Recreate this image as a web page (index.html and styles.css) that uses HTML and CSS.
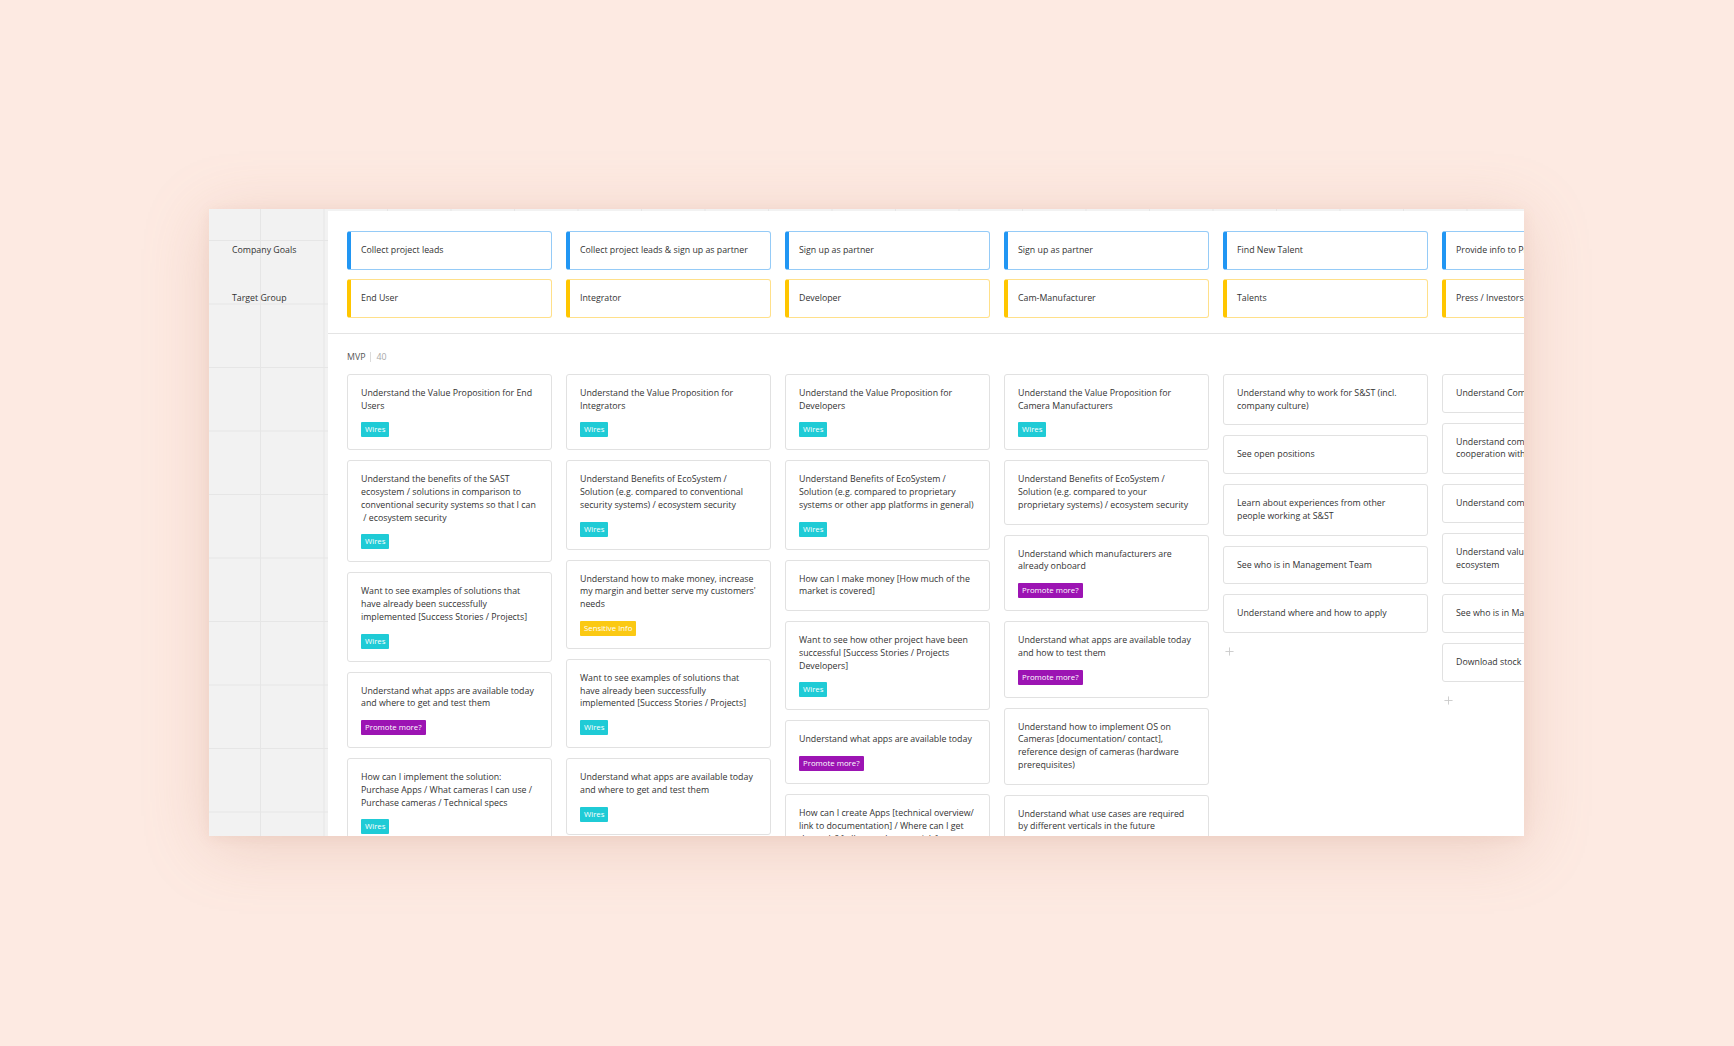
FILE: index.html
```html
<!DOCTYPE html>
<html lang="en">
<head>
    <meta charset="UTF-8">
    <meta name="viewport" content="width=device-width, initial-scale=1.0">
    <title>Story Map | S&amp;ST Website</title>
    <link rel="stylesheet" href="styles.css">
</head>
<body>
    <div class="board">
        <!-- Row labels on the left -->
        <aside class="sidebar">
            <div class="row-label">Company Goals</div>
            <div class="row-label">Target Group</div>
        </aside>

        <main class="map">
            <!-- Goals and personas per column -->
            <header class="map-header">
                <div class="head-col">
                    <div class="head-card goal">Collect project leads</div>
                    <div class="head-card persona">End User</div>
                </div>
                <div class="head-col">
                    <div class="head-card goal">Collect project leads &amp; sign up as partner</div>
                    <div class="head-card persona">Integrator</div>
                </div>
                <div class="head-col">
                    <div class="head-card goal">Sign up as partner</div>
                    <div class="head-card persona">Developer</div>
                </div>
                <div class="head-col">
                    <div class="head-card goal">Sign up as partner</div>
                    <div class="head-card persona">Cam-Manufacturer</div>
                </div>
                <div class="head-col">
                    <div class="head-card goal">Find New Talent</div>
                    <div class="head-card persona">Talents</div>
                </div>
                <div class="head-col">
                    <div class="head-card goal">Provide info to Press / Investors</div>
                    <div class="head-card persona">Press / Investors</div>
                </div>
            </header>

            <section class="release">
                <div class="release-title">MVP <span class="sep"></span> <span class="count">40</span></div>

                <div class="columns">
                    <div class="col">
                        <div class="story">
                            <p>Understand the Value Proposition for End Users</p>
                            <span class="tag wires">Wires</span>
                        </div>
                        <div class="story">
                            <p>Understand the benefits of the SAST ecosystem / solutions in comparison to conventional security systems so that I can &nbsp;/ ecosystem security</p>
                            <span class="tag wires">Wires</span>
                        </div>
                        <div class="story">
                            <p>Want to see examples of solutions that have already been successfully implemented [Success Stories / Projects]</p>
                            <span class="tag wires">Wires</span>
                        </div>
                        <div class="story">
                            <p>Understand what apps are available today and where to get and test them</p>
                            <span class="tag promote">Promote more?</span>
                        </div>
                        <div class="story">
                            <p>How can I implement the solution: Purchase Apps / What cameras I can use / Purchase cameras / Technical specs</p>
                            <span class="tag wires">Wires</span>
                        </div>
                    </div>

                    <div class="col">
                        <div class="story">
                            <p>Understand the Value Proposition for Integrators</p>
                            <span class="tag wires">Wires</span>
                        </div>
                        <div class="story">
                            <p>Understand Benefits of EcoSystem / Solution (e.g. compared to conventional security systems) / ecosystem security</p>
                            <span class="tag wires">Wires</span>
                        </div>
                        <div class="story">
                            <p>Understand how to make money, increase my margin and better serve my customers' needs</p>
                            <span class="tag sensitive">Sensitive Info</span>
                        </div>
                        <div class="story">
                            <p>Want to see examples of solutions that have already been successfully implemented [Success Stories / Projects]</p>
                            <span class="tag wires">Wires</span>
                        </div>
                        <div class="story">
                            <p>Understand what apps are available today and where to get and test them</p>
                            <span class="tag wires">Wires</span>
                        </div>
                    </div>

                    <div class="col">
                        <div class="story">
                            <p>Understand the Value Proposition for Developers</p>
                            <span class="tag wires">Wires</span>
                        </div>
                        <div class="story">
                            <p>Understand Benefits of EcoSystem / Solution (e.g. compared to proprietary systems or other app platforms in general)</p>
                            <span class="tag wires">Wires</span>
                        </div>
                        <div class="story">
                            <p>How can I make money [How much of the market is covered]</p>
                        </div>
                        <div class="story">
                            <p>Want to see how other project have been successful [Success Stories / Projects Developers]</p>
                            <span class="tag wires">Wires</span>
                        </div>
                        <div class="story">
                            <p>Understand what apps are available today</p>
                            <span class="tag promote">Promote more?</span>
                        </div>
                        <div class="story">
                            <p>How can I create Apps [technical overview/ link to documentation] / Where can I get the tools? [sdk, samples, tutorials]</p>
                        </div>
                    </div>

                    <div class="col">
                        <div class="story">
                            <p>Understand the Value Proposition for Camera Manufacturers</p>
                            <span class="tag wires">Wires</span>
                        </div>
                        <div class="story">
                            <p>Understand Benefits of EcoSystem / Solution (e.g. compared to your proprietary systems) / ecosystem security</p>
                        </div>
                        <div class="story">
                            <p>Understand which manufacturers are already onboard</p>
                            <span class="tag promote">Promote more?</span>
                        </div>
                        <div class="story">
                            <p>Understand what apps are available today and how to test them</p>
                            <span class="tag promote">Promote more?</span>
                        </div>
                        <div class="story">
                            <p>Understand how to implement OS on Cameras [documentation/ contact], reference design of cameras (hardware prerequisites)</p>
                        </div>
                        <div class="story">
                            <p>Understand what use cases are required by different verticals in the future</p>
                        </div>
                    </div>

                    <div class="col">
                        <div class="story">
                            <p>Understand why to work for S&amp;ST (incl. company culture)</p>
                        </div>
                        <div class="story">
                            <p>See open positions</p>
                        </div>
                        <div class="story">
                            <p>Learn about experiences from other people working at S&amp;ST</p>
                        </div>
                        <div class="story">
                            <p>See who is in Management Team</p>
                        </div>
                        <div class="story">
                            <p>Understand where and how to apply</p>
                        </div>
                        <button class="add" title="Add story">
                            <svg viewBox="0 0 10 10" width="9" height="9"><path d="M5 0.5V9.5M0.5 5H9.5" stroke="#c9c9c9" stroke-width="1"/></svg>
                        </button>
                    </div>

                    <div class="col">
                        <div class="story">
                            <p>Understand Company Facts</p>
                        </div>
                        <div class="story">
                            <p>Understand company's strategy and cooperation with partners</p>
                        </div>
                        <div class="story">
                            <p>Understand company history</p>
                        </div>
                        <div class="story">
                            <p>Understand value proposition of the ecosystem</p>
                        </div>
                        <div class="story">
                            <p>See who is in Management Team</p>
                        </div>
                        <div class="story">
                            <p>Download stock material</p>
                        </div>
                        <button class="add" title="Add story">
                            <svg viewBox="0 0 10 10" width="9" height="9"><path d="M5 0.5V9.5M0.5 5H9.5" stroke="#c9c9c9" stroke-width="1"/></svg>
                        </button>
                    </div>
                </div>
            </section>
        </main>
    </div>
</body>
</html>
```

FILE: styles.css
```css
/* Story map theme */
:root {
    --color-page: #fdeae2;
    --color-sidebar: #f2f2f2;
    --color-grid: #e6e6e6;
    --color-card-border: #e1e1e1;
    --color-text: #333333;
    --color-muted: #a8a8a8;
    --color-goal: #2196f3;
    --color-goal-border: #95cbf7;
    --color-persona: #ffc600;
    --color-persona-border: #ffe08a;
    --color-wires: #1fcbd6;
    --color-promote: #9c14b3;
    --color-sensitive: #fbc913;
}

* {
    margin: 0;
    padding: 0;
    box-sizing: border-box;
}

body {
    font-family: "Open Sans", "Noto Sans", sans-serif;
    font-size: 8.8px;
    line-height: 12.75px;
    color: var(--color-text);
    background-color: var(--color-page);
    height: 1046px;
    overflow: hidden;
    padding: 209px 0 0 209px;
}

.board {
    width: 1315px;
    height: 627px;
    display: flex;
    overflow: hidden;
    background-color: var(--color-sidebar);
    background-image:
        linear-gradient(to right, var(--color-grid) 1px, transparent 1px),
        linear-gradient(to bottom, var(--color-grid) 1px, transparent 1px);
    background-size: 63.5px 63.5px;
    background-position: 51px 31px;
    box-shadow: 0 10px 60px rgba(196, 140, 118, 0.28), 0 2px 12px rgba(196, 140, 118, 0.12);
}

/* Left label column */
.sidebar {
    width: 119px;
    flex: none;
    padding: 22px 0 0 23px;
    display: flex;
    flex-direction: column;
    gap: 9px;
}

.row-label {
    height: 39px;
    display: flex;
    align-items: center;
}

.map {
    flex: 1;
    margin-top: 2px;
    background: #fff;
    overflow: hidden;
    min-width: 0;
}

/* Goals / personas */
.map-header {
    display: flex;
    gap: 14px;
    padding: 20px 0 15px 19px;
    border-bottom: 1px solid #e4e4e4;
}

.head-col {
    width: 205px;
    flex: none;
    display: flex;
    flex-direction: column;
    gap: 9px;
}

.head-card {
    height: 39px;
    display: flex;
    align-items: center;
    padding-left: 10px;
    border-radius: 3px;
    border: 1px solid;
    border-left-width: 4px;
    white-space: nowrap;
    overflow: hidden;
}

.head-card.goal {
    border-color: var(--color-goal-border);
    border-left-color: var(--color-goal);
}

.head-card.persona {
    border-color: var(--color-persona-border);
    border-left-color: var(--color-persona);
}

/* Release lane */
.release {
    padding: 17px 0 0 19px;
}

.release-title {
    display: flex;
    align-items: center;
    margin-bottom: 10px;
    color: #555;
}

.release-title .sep {
    width: 1px;
    height: 10px;
    background: #dcdcdc;
    margin: 0 5px;
}

.release-title .count {
    color: var(--color-muted);
}

.columns {
    display: flex;
    gap: 14px;
    align-items: flex-start;
}

.col {
    width: 205px;
    flex: none;
    display: flex;
    flex-direction: column;
    gap: 10px;
}

.story {
    border: 1px solid var(--color-card-border);
    border-radius: 3px;
    padding: 12px 13px;
    background: #fff;
}

.tag {
    display: inline-block;
    margin-top: 10px;
    height: 15px;
    line-height: 15px;
    padding: 0 4px;
    border-radius: 1px;
    font-size: 7.8px;
    color: #fff;
}

.tag.wires {
    background: var(--color-wires);
}

.tag.promote {
    background: var(--color-promote);
}

.tag.sensitive {
    background: var(--color-sensitive);
}

.add {
    align-self: flex-start;
    border: none;
    background: none;
    padding: 4px 0 0 2px;
    cursor: pointer;
    display: flex;
}
```
